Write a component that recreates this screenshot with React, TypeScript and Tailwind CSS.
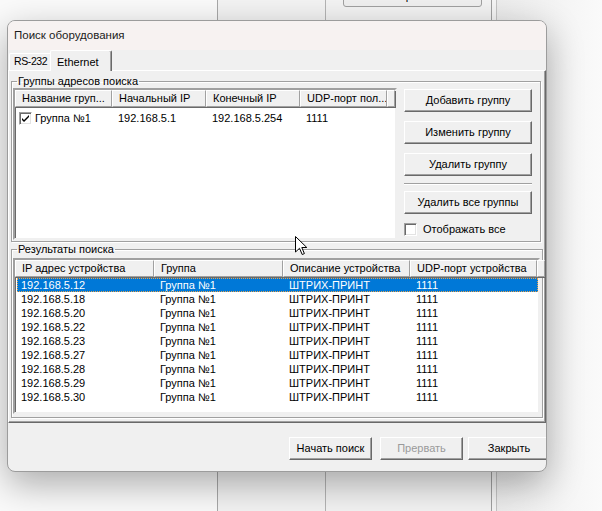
import React from 'react';

const rows = ['12', '18', '20', '22', '23', '27', '28', '29', '30'];

function Btn({
  children,
  className = '',
  disabled = false,
}: {
  children: React.ReactNode;
  className?: string;
  disabled?: boolean;
}) {
  return (
    <div
      className={`flex items-center justify-center h-[23px] bg-[#f0f0f0] border border-t-white border-l-white border-r-[#696969] border-b-[#696969] shadow-[inset_-1px_-1px_0_#a0a0a0] text-[11px] whitespace-nowrap ${
        disabled ? 'text-[#9a9a9a]' : 'text-black'
      } ${className}`}
    >
      {children}
    </div>
  );
}

function Head({ className, children }: { className: string; children?: React.ReactNode }) {
  return (
    <div
      className={`h-full shrink-0 flex items-center pl-[6px] bg-[#f0f0f0] border-t border-l border-t-white border-l-white border-r border-b border-r-[#a0a0a0] border-b-[#a0a0a0] shadow-[1px_1px_0_#696969] whitespace-nowrap overflow-hidden ${className}`}
    >
      {children}
    </div>
  );
}

function CheckBox({ checked }: { checked?: boolean }) {
  return (
    <div className="w-[13px] h-[13px] shrink-0 bg-white border border-t-[#a0a0a0] border-l-[#a0a0a0] border-r-white border-b-white shadow-[inset_1px_1px_0_#696969,inset_-1px_-1px_0_#e3e3e3] flex items-center justify-center">
      {checked && (
        <svg width="9" height="9" viewBox="0 0 9 9">
          <path d="M1 4 L3 6 L8 1 L8 3 L3 8 L1 6 Z" fill="#000" />
        </svg>
      )}
    </div>
  );
}

export default function App() {
  return (
    <div className="relative w-[602px] h-[511px] overflow-hidden bg-[#fafafa] font-['Liberation_Sans',Arial,sans-serif] text-black">
      {/* window behind */}
      <div className="absolute left-[217px] top-0 w-[280px] h-full bg-[#f3f3f3] border-l border-[#a8a8a8] flex">
        <div className="w-[108px] h-full border-r border-[#b4b4b4]" />
        <div className="flex-1 h-full border-r border-[#a0a0a0]" />
        <div className="w-[5px] h-full bg-[#f5f5f5] border-r border-[#c4c4c4]" />
      </div>
      <div className="absolute left-[343px] -top-[15px] w-[139px] h-[22px] bg-[#efefef] border border-[#a0a0a0] rounded-[3px] flex items-center justify-center text-[11px]">
        Настроить...
      </div>
      <div className="absolute left-[497px] top-0 w-[105px] h-full bg-gradient-to-r from-[#ececec] to-[#fafafa]" />

      {/* dialog */}
      <div className="absolute left-[7px] top-[20px] w-[540px] h-[452px] rounded-[8px] border border-[#9c9c9c] overflow-hidden flex flex-col bg-[#f0f0f0] shadow-[0_12px_36px_rgba(0,0,0,0.32)]">
        <div className="h-[29px] shrink-0 bg-[#f7f2f1] flex items-center pl-[6px] text-[11.5px] text-[#1b1b1b]">
          Поиск оборудования
        </div>

        {/* tabs */}
        <div className="h-[20px] flex items-end pl-[1px]">
          <div className="w-[42px] h-[17px] border-t border-l border-t-white border-l-white border-r border-r-[#696969] rounded-tl-[2px] flex items-center pl-[4px] text-[10.5px] tracking-[-0.4px] whitespace-nowrap">
            RS-232
          </div>
          <div className="relative z-10 -ml-[1px] w-[62px] h-[21px] -mb-[1px] bg-[#f0f0f0] border-t border-l border-t-white border-l-white border-r border-r-[#696969] shadow-[inset_-1px_0_0_#a0a0a0] rounded-t-[2px] flex items-start pt-[3px] pl-[6px] text-[11px] whitespace-nowrap">
            Ethernet
          </div>
        </div>

        {/* tab page */}
        <div className="w-[538px] h-[353px] shrink-0 border border-t-white border-l-white border-r-[#696969] border-b-[#696969] shadow-[inset_-1px_-1px_0_#a0a0a0] pl-[2px] pt-[4px]">
          <fieldset className="w-[530px] h-[167px] border border-[#a0a0a0] shadow-[inset_1px_1px_0_#fff,1px_1px_0_#fff] px-0">
            <legend className="ml-[5px] px-[1px] text-[11px] leading-[13px]">Группы адресов поиска</legend>
            <div className="flex pl-[1px]">
              <div className="w-[384px] h-[152px] bg-white border-2 border-t-[#a0a0a0] border-l-[#a0a0a0] border-r-[#f0f0f0] border-b-[#f0f0f0] shadow-[inset_1px_1px_0_#696969] flex flex-col text-[11px]">
                <div className="h-[17px] flex shrink-0">
                  <Head className="w-[97px]">Название груп...</Head>
                  <Head className="w-[94px]">Начальный IP</Head>
                  <Head className="w-[94px]">Конечный IP</Head>
                  <Head className="w-[87px]">UDP-порт пол...</Head>
                  <Head className="flex-1" />
                </div>
                <div className="flex items-center h-[16px] mt-[3px]">
                  <div className="w-[97px] pl-[4px] flex items-center gap-[3px]">
                    <CheckBox checked />
                    <span>Группа №1</span>
                  </div>
                  <div className="w-[94px] pl-[6px]">192.168.5.1</div>
                  <div className="w-[94px] pl-[6px]">192.168.5.254</div>
                  <div className="w-[87px] pl-[6px]">1111</div>
                </div>
              </div>
              <div className="ml-[7px] w-[128px] flex flex-col">
                <Btn className="mt-[1px]">Добавить группу</Btn>
                <Btn className="mt-[9px]">Изменить группу</Btn>
                <Btn className="mt-[9px]">Удалить группу</Btn>
                <div className="mt-[7px] h-[2px] border-t border-[#a0a0a0] border-b border-b-white" />
                <Btn className="mt-[6px]">Удалить все группы</Btn>
                <div className="mt-[7px] flex items-center gap-[6px] text-[11px]">
                  <CheckBox />
                  <span>Отображать все</span>
                </div>
              </div>
            </div>
          </fieldset>

          <fieldset className="mt-[1px] w-[532px] h-[175px] border border-[#a0a0a0] shadow-[inset_1px_1px_0_#fff,1px_1px_0_#fff] px-0">
            <legend className="ml-[5px] px-[1px] text-[11px] leading-[13px]">Результаты поиска</legend>
            <div className="pl-[1px] pt-[2px]">
              <div className="w-[527px] h-[156px] bg-white border-2 border-t-[#a0a0a0] border-l-[#a0a0a0] border-r-[#f0f0f0] border-b-[#f0f0f0] shadow-[inset_1px_1px_0_#696969] flex flex-col text-[11px]">
                <div className="h-[17px] flex shrink-0">
                  <Head className="w-[139px]">IP адрес устройства</Head>
                  <Head className="w-[129px]">Группа</Head>
                  <Head className="w-[127px]">Описание устройства</Head>
                  <Head className="w-[127px]">UDP-порт устройства</Head>
                  <Head className="flex-1" />
                </div>
                <div className="pt-[1px] pl-[2px]">
                  {rows.map((r, i) => (
                    <div
                      key={r}
                      className={`flex items-center h-[14px] w-[521px] leading-[14px] ${
                        i === 0 ? 'bg-[#0078d7] text-white outline outline-1 outline-dotted outline-[#e8a34c] -outline-offset-1' : ''
                      }`}
                    >
                      <div className="w-[137px] pl-[4px]">192.168.5.{r}</div>
                      <div className="w-[129px] pl-[6px]">Группа №1</div>
                      <div className="w-[127px] pl-[6px]">ШТРИХ-ПРИНТ</div>
                      <div className="w-[127px] pl-[6px]">1111</div>
                    </div>
                  ))}
                </div>
              </div>
            </div>
          </fieldset>
        </div>

        {/* bottom buttons */}
        <div className="flex pt-[14px] pl-[281px]">
          <Btn className="w-[83px] shrink-0">Начать поиск</Btn>
          <Btn className="w-[83px] ml-[8px] shrink-0" disabled>
            Прервать
          </Btn>
          <Btn className="w-[88px] ml-[5px] shrink-0 pr-[6px]">Закрыть</Btn>
        </div>
      </div>

      {/* mouse cursor */}
      <svg className="absolute left-[295px] top-[236px]" width="13" height="20" viewBox="0 0 13 20">
        <path d="M0.5 0.5 L0.5 16 L4.5 12.3 L7.2 18.5 L9.4 17.6 L6.8 11.5 L11.8 11.5 Z" fill="#fff" stroke="#000" strokeWidth="1" />
      </svg>
    </div>
  );
}
